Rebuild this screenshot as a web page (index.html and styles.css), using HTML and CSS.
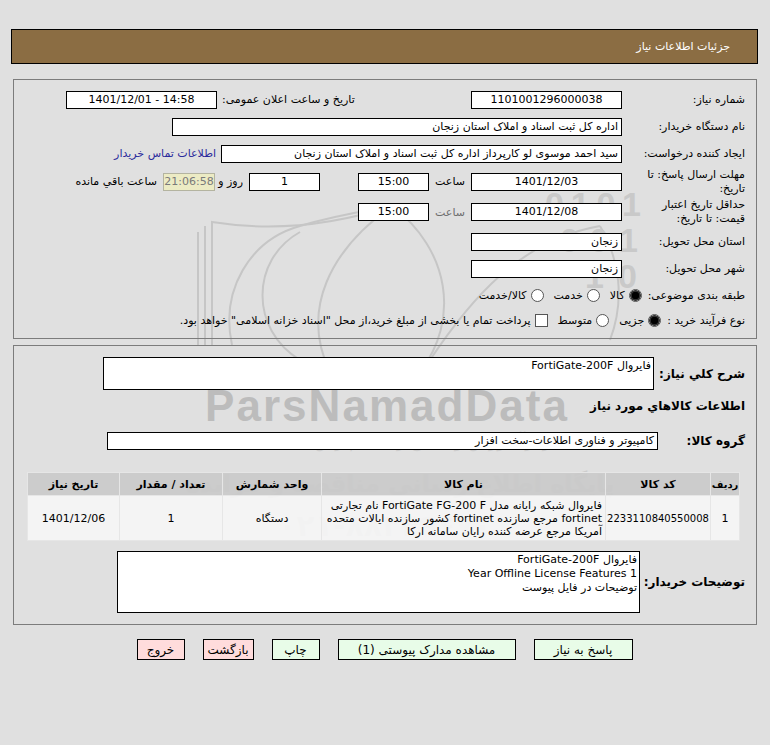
FILE: index.html
```html
<!DOCTYPE html>
<html lang="fa" dir="rtl">
<head>
  <meta charset="UTF-8">
  <title>جزئیات اطلاعات نیاز</title>
  <link rel="stylesheet" href="styles.css">
</head>
<body>
<div class="page">

  <svg class="wm" width="770" height="745" viewBox="0 0 770 745" aria-hidden="true">
    <g fill="none" stroke="#c6c6c6" stroke-width="2">
      <path d="M198 345 V232"/>
      <path d="M205 345 V226"/>
      <path d="M212 345 V222 Q300 236 392 206"/>
      <path d="M232 345 C220 290 250 240 300 226 C340 214 372 210 392 206"/>
      <path d="M300 360 C250 330 250 260 300 232"/>
      <path d="M392 206 C330 250 300 310 330 372"/>
      <path d="M392 206 C450 250 460 320 420 372"/>
      <path d="M430 360 C470 300 520 240 600 226"/>
      <path d="M600 226 C620 260 625 300 610 340"/>
    </g>
    <g fill="#c9c9c9" font-family="Liberation Sans, Arial, sans-serif" font-weight="bold">
      <text x="545" y="216" font-size="34" textLength="96" direction="ltr">0101</text>
      <text x="560" y="252" font-size="34" textLength="78" direction="ltr">001</text>
      <text x="585" y="288" font-size="34" textLength="52" direction="ltr">10</text>
    </g>
    <text x="205" y="421" font-family="Liberation Sans, Arial, sans-serif" font-weight="bold" font-size="44" fill="#bcbcbc" textLength="362" direction="ltr">ParsNamadData</text>
    <g fill="#cdcdcd" font-family="DejaVu Sans, sans-serif" text-anchor="middle">
      <text x="395" y="447" font-size="17" font-style="italic">مرکز آموزش و اطلاع رسانی پارس نامه داده ها</text>
      <text x="400" y="492" font-size="24" font-weight="bold">پایگاه اطلاع رسانی مناقصه و مزایده</text>
      <text x="385" y="536" font-size="30" font-weight="bold">۰۲۱-۸۸۳۴۹۶۷۰</text>
    </g>
  </svg>

  <div class="titlebar">جزئیات اطلاعات نیاز</div>

  <div class="panel info">
    <div class="row">
      <span class="lbl">شماره نیاز:</span>
      <span class="box w150 mid">1101001296000038</span>
      <span class="lbl2">تاریخ و ساعت اعلان عمومی:</span>
      <span class="box w150 mid" dir="ltr">1401/12/01 - 14:58</span>
    </div>
    <div class="row">
      <span class="lbl">نام دستگاه خریدار:</span>
      <span class="box w450">اداره کل ثبت اسناد و املاک استان زنجان</span>
    </div>
    <div class="row">
      <span class="lbl">ایجاد کننده درخواست:</span>
      <span class="box w401">سید احمد موسوی لو کارپرداز اداره کل ثبت اسناد و املاک استان زنجان</span>
      <a class="contact" href="#">اطلاعات تماس خریدار</a>
    </div>
    <div class="row tall">
      <span class="lbl two">مهلت ارسال پاسخ: تا<br>تاریخ:</span>
      <span class="box w150 mid">1401/12/03</span>
      <span class="unit">ساعت</span>
      <span class="box w70 mid">15:00</span>
      <span class="box w70 mid days">1</span>
      <span class="unit2">روز و</span>
      <span class="timer">21:06:58</span>
      <span class="remain">ساعت باقي مانده</span>
    </div>
    <div class="row taller">
      <span class="lbl two">حداقل تاریخ اعتبار<br>قیمت: تا تاریخ:</span>
      <span class="box w150 mid">1401/12/08</span>
      <span class="unit dim">ساعت</span>
      <span class="box w70 mid">15:00</span>
    </div>
    <div class="row">
      <span class="lbl">استان محل تحویل:</span>
      <span class="box w150">زنجان</span>
    </div>
    <div class="row">
      <span class="lbl">شهر محل تحویل:</span>
      <span class="box w150">زنجان</span>
    </div>
    <div class="row">
      <span class="lbl free">طبقه بندی موضوعی:</span>
      <span class="radio on"></span><span class="opt">کالا</span>
      <span class="radio"></span><span class="opt">خدمت</span>
      <span class="radio"></span><span class="opt">کالا/خدمت</span>
    </div>
    <div class="row short">
      <span class="lbl free">نوع فرآیند خرید :</span>
      <span class="radio on"></span><span class="opt">جزیی</span>
      <span class="radio"></span><span class="opt">متوسط</span>
      <span class="check"></span><span class="opt">پرداخت تمام یا بخشی از مبلغ خرید،از محل "اسناد خزانه اسلامی" خواهد بود.</span>
    </div>
  </div>

  <div class="panel items">
    <div class="desc-row">
      <span class="blbl w102">شرح کلي نیاز:</span>
      <div class="area w550 h33">فایروال FortiGate-200F</div>
    </div>
    <div class="sectitle">اطلاعات کالاهاي مورد نیاز</div>
    <div class="group-row">
      <span class="blbl w98">گروه کالا:</span>
      <span class="box w550">کامپیوتر و فناوری اطلاعات-سخت افزار</span>
    </div>

    <table class="goods">
      <tr>
        <th class="c1">ردیف</th>
        <th class="c2">کد کالا</th>
        <th class="c3">نام کالا</th>
        <th class="c4">واحد شمارش</th>
        <th class="c5">تعداد / مقدار</th>
        <th class="c6">تاریخ نیاز</th>
      </tr>
      <tr>
        <td>1</td>
        <td class="code">2233110840550008</td>
        <td class="name">فایروال شبکه رایانه مدل FortiGate FG-200 F نام تجارتی<br>fortinet مرجع سازنده fortinet کشور سازنده ایالات متحده<br>آمریکا مرجع عرضه کننده رایان سامانه ارکا</td>
        <td>دستگاه</td>
        <td>1</td>
        <td>1401/12/06</td>
      </tr>
    </table>

    <div class="note-row">
      <span class="blbl w116">توضیحات خریدار:</span>
      <div class="area w522 h62">فایروال FortiGate-200F<br>1 Year Offline License Features<br>توضیحات در فایل پیوست</div>
    </div>
  </div>

  <div class="buttons">
    <button class="btn ok first">پاسخ به نیاز</button>
    <button class="btn ok wide">مشاهده مدارک پیوستی (1)</button>
    <button class="btn ok">چاپ</button>
    <button class="btn no">بازگشت</button>
    <button class="btn no">خروج</button>
  </div>

</div>
</body>
</html>
```

FILE: styles.css
```css
body {
  margin: 0;
  background-color: #e0e0e0;
  font-family: Tahoma, "DejaVu Sans", sans-serif;
  font-size: 11px;
  color: #000;
}
.page {
  position: relative;
  padding: 29px 12px 0 11px;
  height: 716px;
}
.wm {
  position: absolute;
  top: 0;
  left: 0;
  z-index: 0;
  pointer-events: none;
}
.titlebar,
.panel,
.buttons {
  position: relative;
  z-index: 1;
}
.titlebar {
  height: 33px;
  line-height: 33px;
  border: 1px solid #000;
  background-color: #8b6d43;
  color: #fff;
  padding-right: 27px;
}
.panel {
  margin: 15px 1px 0 2px;
  border: 1px solid #7c7c7c;
}
.info {
  padding: 6px 0 6px;
}
.row {
  display: flex;
  align-items: center;
  height: 27px;
}
.row.tall {
  height: 29px;
}
.row.taller {
  height: 32px;
}
.row.short {
  height: 23px;
}
.lbl {
  flex: none;
  width: 134px;
  padding-right: 11px;
  box-sizing: border-box;
  white-space: nowrap;
}
.lbl.two {
  line-height: 14px;
}
.lbl.free {
  width: auto;
  margin-left: 6px;
}
.lbl2 {
  flex: none;
  width: 254px;
  padding-left: 5px;
  box-sizing: border-box;
  text-align: left;
}
.box {
  flex: none;
  display: block;
  height: 18px;
  line-height: 16px;
  box-sizing: border-box;
  border: 1px solid #000;
  background-color: #fff;
  padding: 0 3px;
  white-space: nowrap;
  overflow: hidden;
}
.mid {
  text-align: center;
}
.w150 { width: 151px; }
.w450 { width: 450px; }
.w401 { width: 401px; }
.w70 { width: 71px; }
.w550 { width: 551px; }
.contact {
  color: #2b2b9c;
  text-decoration: none;
  margin-right: 5px;
}
.unit {
  flex: none;
  width: 42px;
  text-align: center;
}
.unit.dim {
  color: #6e6e6e;
}
.days {
  margin-right: 38px;
}
.unit2 {
  flex: none;
  width: 34px;
  padding-right: 6px;
  box-sizing: border-box;
}
.timer {
  flex: none;
  width: 52px;
  height: 18px;
  line-height: 16px;
  box-sizing: border-box;
  border: 1px solid #b4b4a0;
  background-color: #ecebc4;
  color: #7a7a7a;
  text-align: center;
}
.remain {
  margin-right: 6px;
}
.radio {
  flex: none;
  width: 13px;
  height: 13px;
  box-sizing: border-box;
  border: 1px solid #555;
  border-radius: 50%;
  background-color: #fff;
  margin-left: 4px;
}
.radio.on {
  background: radial-gradient(circle, #000 0 3.5px, #333 4px 5px, #bbb 5.5px);
}
.check {
  flex: none;
  width: 13px;
  height: 13px;
  box-sizing: border-box;
  border: 1px solid #555;
  background-color: #fff;
  margin-left: 4px;
}
.opt {
  margin-left: 10px;
  white-space: nowrap;
}

.items {
  margin-top: 6px;
  padding: 11px 0 11px;
}
.desc-row,
.group-row,
.note-row {
  display: flex;
  align-items: center;
}
.blbl {
  flex: none;
  font-weight: bold;
  font-size: 12px;
  padding-right: 11px;
  box-sizing: border-box;
  white-space: nowrap;
}
.w102 { width: 102px; }
.w98 { width: 98px; }
.w116 { width: 116px; }
.area {
  flex: none;
  box-sizing: border-box;
  border: 1px solid #000;
  background-color: #fff;
  padding: 1px 2px;
  line-height: 14px;
}
.h33 { height: 33px; }
.h62 { height: 62px; }
.w522 { width: 523px; }
.sectitle {
  height: 32px;
  line-height: 32px;
  padding-right: 11px;
  font-weight: bold;
  font-size: 12px;
}
.group-row {
  margin-top: 10px;
}
.goods {
  margin: 22px 16px 0 13px;
  width: 713px;
  table-layout: fixed;
  border-collapse: collapse;
  background-color: rgba(236, 236, 236, 0.6);
}
.goods th,
.goods td {
  border: 1px solid #e6e6e6;
  text-align: center;
  padding: 0;
  overflow: hidden;
}
.goods th {
  height: 22px;
  background-color: rgba(196, 196, 196, 0.8);
  font-weight: bold;
}
.goods th.c1 {
  font-size: 10px;
  overflow: visible;
  white-space: nowrap;
}
.goods td {
  height: 44px;
  background-color: rgba(248, 248, 248, 0.75);
}
.goods td.code {
  font-size: 10px;
}
.goods td.name {
  text-align: right;
  line-height: 13px;
  padding-right: 3px;
  white-space: nowrap;
}
.c1 { width: 28px; }
.c2 { width: 104px; }
.c3 { width: 283px; }
.c4 { width: 98px; }
.c5 { width: 102px; }
.note-row {
  margin-top: 10px;
}
.buttons {
  display: flex;
  justify-content: center;
  gap: 18px;
  margin-top: 14px;
}
.btn {
  height: 21px;
  padding: 0 4px;
  min-width: 48px;
  border: 1px solid #000;
  font-family: Tahoma, "DejaVu Sans", sans-serif;
  font-size: 12px;
  color: #000;
}
.btn.ok {
  background-color: #e8fce8;
}
.btn.no {
  background-color: #ffdcdc;
}
.btn.wide {
  width: 178px;
}
.btn.first {
  width: 99px;
}
```
